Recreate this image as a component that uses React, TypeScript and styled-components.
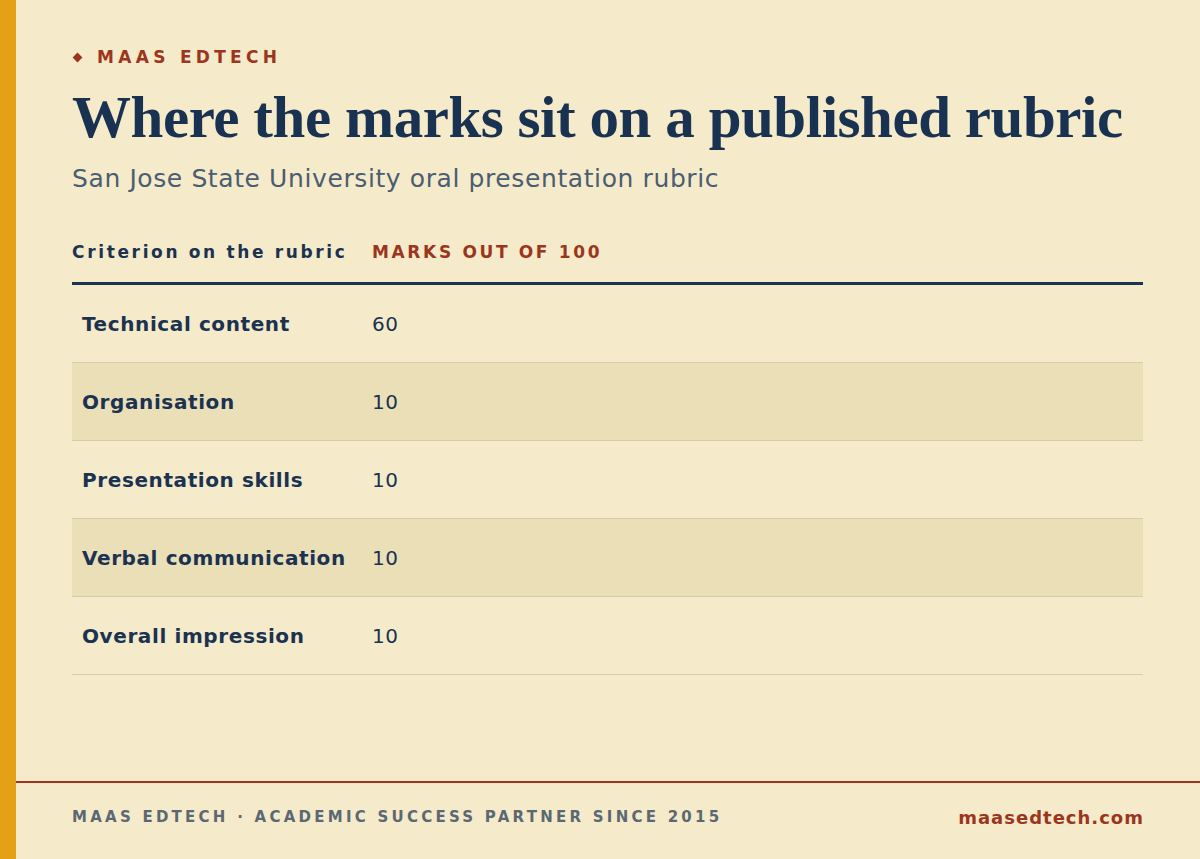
import React from "react";
import styled, { createGlobalStyle } from "styled-components";

const Global = createGlobalStyle`
  html, body { margin: 0; padding: 0; background: #f5ebca; }
  body { width: 1200px; height: 859px; overflow: hidden; }
`;

const Page = styled.div`
  width: 1200px;
  height: 859px;
  display: flex;
  background: #f5ebca;
  font-family: "DejaVu Sans", "Open Sans", sans-serif;
`;

const Accent = styled.div`
  width: 16px;
  flex: none;
  background: #e4a116;
`;

const Main = styled.div`
  flex: 1;
  display: flex;
  flex-direction: column;
`;

const Content = styled.div`
  flex: 1;
  padding: 44px 56px 0 56px;
`;

const Brand = styled.div`
  display: flex;
  align-items: center;
  gap: 16px;
  color: #9c3520;
  font-weight: 700;
  font-size: 17px;
  letter-spacing: 4.3px;
  height: 26px;
`;

const Diamond = styled.span`
  width: 7px;
  height: 7px;
  margin-left: 2px;
  background: #9c3520;
  transform: rotate(45deg);
`;

const Title = styled.h1`
  margin: 9px 0 0 0;
  font-family: "Liberation Serif", "DejaVu Serif", serif;
  font-weight: 700;
  font-size: 59px;
  line-height: 76px;
  color: #193252;
  letter-spacing: -0.45px;
  white-space: nowrap;
`;

const Subtitle = styled.p`
  margin: 7px 0 0 0;
  font-size: 25px;
  line-height: 34px;
  letter-spacing: 0.6px;
  color: #4a5d72;
`;

const Table = styled.div`
  margin-top: 19px;
  width: 1071px;
`;

const HeadRow = styled.div`
  display: grid;
  grid-template-columns: 300px 1fr;
  height: 60px;
  padding-top: 7px;
  align-items: center;
  border-bottom: 3px solid #1d3250;
`;

const HeadCell = styled.div<{ $accent?: boolean }>`
  font-weight: 700;
  font-size: 17px;
  letter-spacing: 2.65px;
  color: ${(p) => (p.$accent ? "#9c3520" : "#1b3251")};
  text-transform: ${(p) => (p.$accent ? "uppercase" : "none")};
`;

const Row = styled.div<{ $shaded?: boolean }>`
  display: grid;
  grid-template-columns: 300px 1fr;
  height: 77px;
  align-items: center;
  border-bottom: 1px solid #d6ccaa;
  background: ${(p) => (p.$shaded ? "#ebdfb8" : "transparent")};
`;

const Criterion = styled.div`
  padding-left: 10px;
  font-weight: 700;
  font-size: 20px;
  letter-spacing: 0.6px;
  color: #1b3251;
`;

const Mark = styled.div`
  font-size: 20px;
  letter-spacing: 0.6px;
  color: #1b3251;
`;

const Footer = styled.div`
  height: 68px;
  border-top: 2px solid #9c3520;
  display: flex;
  align-items: center;
  justify-content: space-between;
  padding: 0 57px 8px 56px;
`;

const FootNote = styled.div`
  font-size: 15px;
  font-weight: 700;
  letter-spacing: 3.25px;
  color: #5b6873;
`;

const Site = styled.div`
  font-size: 18px;
  font-weight: 700;
  letter-spacing: 1px;
  margin-right: -1px;
  color: #9c3520;
`;

const rows: [string, number][] = [
  ["Technical content", 60],
  ["Organisation", 10],
  ["Presentation skills", 10],
  ["Verbal communication", 10],
  ["Overall impression", 10],
];

export default function App() {
  return (
    <>
      <Global />
      <Page>
        <Accent />
        <Main>
          <Content>
            <Brand>
              <Diamond />
              MAAS EDTECH
            </Brand>
            <Title>Where the marks sit on a published rubric</Title>
            <Subtitle>San Jose State University oral presentation rubric</Subtitle>
            <Table>
              <HeadRow>
                <HeadCell>Criterion on the rubric</HeadCell>
                <HeadCell $accent>Marks out of 100</HeadCell>
              </HeadRow>
              {rows.map(([c, m], i) => (
                <Row key={c} $shaded={i % 2 === 1}>
                  <Criterion>{c}</Criterion>
                  <Mark>{m}</Mark>
                </Row>
              ))}
            </Table>
          </Content>
          <Footer>
            <FootNote>MAAS EDTECH · ACADEMIC SUCCESS PARTNER SINCE 2015</FootNote>
            <Site>maasedtech.com</Site>
          </Footer>
        </Main>
      </Page>
    </>
  );
}
